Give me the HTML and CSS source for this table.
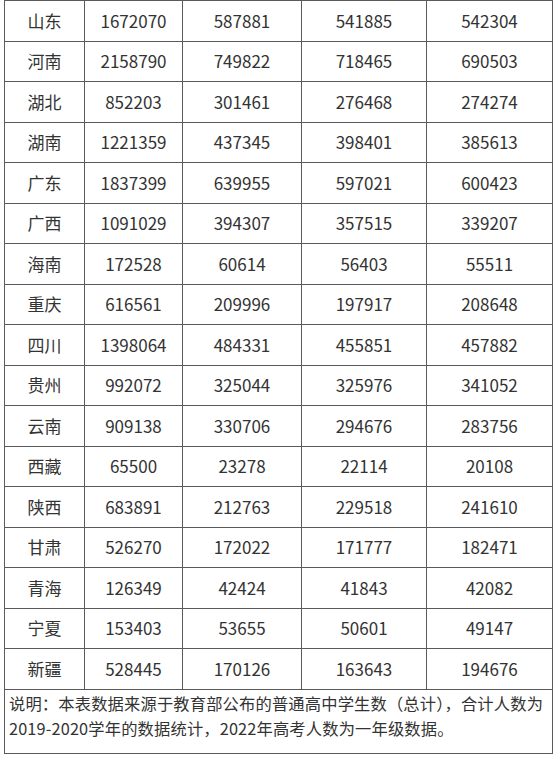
FILE: index.html
```html
<!DOCTYPE html>
<html lang="zh-CN">
<head>
<meta charset="utf-8">
<link rel="stylesheet" href="styles.css">
</head>
<body>
<div class="page">
<table class="data">
<colgroup>
<col class="c1"><col class="c2"><col class="c3"><col class="c4"><col class="c5">
</colgroup>
<tbody>
<tr><td>山东</td><td>1672070</td><td>587881</td><td>541885</td><td>542304</td></tr>
<tr><td>河南</td><td>2158790</td><td>749822</td><td>718465</td><td>690503</td></tr>
<tr><td>湖北</td><td>852203</td><td>301461</td><td>276468</td><td>274274</td></tr>
<tr><td>湖南</td><td>1221359</td><td>437345</td><td>398401</td><td>385613</td></tr>
<tr><td>广东</td><td>1837399</td><td>639955</td><td>597021</td><td>600423</td></tr>
<tr><td>广西</td><td>1091029</td><td>394307</td><td>357515</td><td>339207</td></tr>
<tr><td>海南</td><td>172528</td><td>60614</td><td>56403</td><td>55511</td></tr>
<tr><td>重庆</td><td>616561</td><td>209996</td><td>197917</td><td>208648</td></tr>
<tr><td>四川</td><td>1398064</td><td>484331</td><td>455851</td><td>457882</td></tr>
<tr><td>贵州</td><td>992072</td><td>325044</td><td>325976</td><td>341052</td></tr>
<tr><td>云南</td><td>909138</td><td>330706</td><td>294676</td><td>283756</td></tr>
<tr><td>西藏</td><td>65500</td><td>23278</td><td>22114</td><td>20108</td></tr>
<tr><td>陕西</td><td>683891</td><td>212763</td><td>229518</td><td>241610</td></tr>
<tr><td>甘肃</td><td>526270</td><td>172022</td><td>171777</td><td>182471</td></tr>
<tr><td>青海</td><td>126349</td><td>42424</td><td>41843</td><td>42082</td></tr>
<tr><td>宁夏</td><td>153403</td><td>53655</td><td>50601</td><td>49147</td></tr>
<tr><td>新疆</td><td>528445</td><td>170126</td><td>163643</td><td>194676</td></tr>
<tr class="note"><td colspan="5">说明：本表数据来源于教育部公布的普通高中学生数（总计），合计人数为2019-2020学年的数据统计，2022年高考人数为一年级数据。</td></tr>
</tbody>
</table>
</div>
</body>
</html>
```

FILE: styles.css
```css
html, body {
  margin: 0;
  padding: 0;
  background: #ffffff;
}
.page {
  padding: 0 5px 0 4px;
  width: 548px;
}
.data {
  border-collapse: collapse;
  table-layout: fixed;
  width: 548px;
  font-family: "Noto Sans CJK SC", "Noto Sans", sans-serif;
  color: #333333;
  font-size: 17px;
}
.c1 { width: 80px; }
.c2 { width: 98px; }
.c3 { width: 119px; }
.c4 { width: 125px; }
.c5 { width: 126px; }
.data td {
  border: 1px solid #5a5a5a;
  height: 40.5px;
  padding: 0;
  text-align: center;
  vertical-align: middle;
  line-height: 20px;
  box-sizing: border-box;
}
.data tr.note td {
  height: 64px;
  text-align: left;
  font-size: 16.3px;
  line-height: 25px;
  padding: 0 4px 10px 4px;
  letter-spacing: 0.15px;
}
```
